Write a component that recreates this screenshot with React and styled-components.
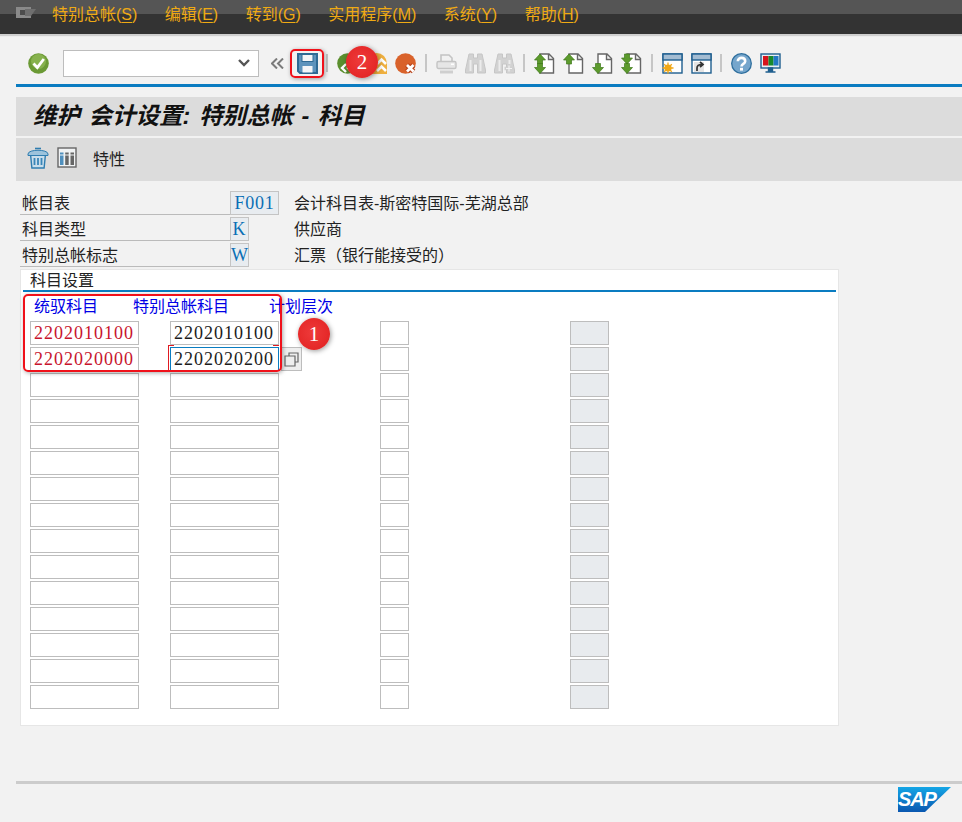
import React from "react";
import styled, { createGlobalStyle } from "styled-components";

const GlobalStyle = createGlobalStyle`
  html, body { margin: 0; padding: 0; background: #f2f2f2; }
  body { font-family: "Liberation Sans", "Noto Sans CJK SC", sans-serif; font-size: 16px; color: #222; }
`;

const Page = styled.div`
  position: relative;
  width: 962px;
  height: 822px;
  overflow: hidden;
`;

const MenuBar = styled.div`
  display: flex;
  align-items: center;
  gap: 27.5px;
  height: 34px;
  padding-left: 16px;
  box-sizing: border-box;
  background: linear-gradient(#555 0, #555 14px, #333 14px, #333 100%);
  box-shadow: 0 2px 1px #cfcfcf;
`;

const MenuLogo = styled.svg`
  width: 20px;
  height: 14px;
  margin: -8px -11.5px 0 0;
`;

const MenuItem = styled.span`
  color: #efaa14;
  font-size: 16px;
  line-height: 1;
  margin-top: -4px;
  u { text-underline-offset: 2px; }
`;

const Toolbar = styled.div`
  display: flex;
  align-items: center;
  height: 50px;
  padding: 8px 0 0 23.5px;
  box-sizing: border-box;
`;

const Rule = styled.div`
  height: 3px;
  margin-left: 16px;
  background: #0a7cc1;
`;

const Slot = styled.div`
  flex: none;
  width: ${(p) => p.$w || 29}px;
  margin-left: ${(p) => p.$ml || 0}px;
  display: flex;
  justify-content: center;
  align-items: center;
`;

const Sep = styled.div`
  flex: none;
  width: 11.5px;
  display: flex;
  justify-content: center;
  &::before {
    content: "";
    width: 2px;
    height: 18px;
    background: #c6c6c6;
  }
`;

const CommandBox = styled.div`
  flex: none;
  width: 196px;
  height: 27px;
  margin-left: 10.5px;
  box-sizing: border-box;
  background: #fff;
  border: 1px solid #bdbdbd;
  display: flex;
  align-items: center;
  justify-content: flex-end;
  padding-right: 8px;
`;

const TitleBar = styled.h1`
  margin: 10px 0 0 16px;
  height: 39px;
  padding-left: 17px;
  box-sizing: border-box;
  background: #dcdcdc;
  font-size: 23.5px;
  font-weight: 700;
  font-style: italic;
  word-spacing: 2px;
  line-height: 39px;
  color: #111;
  white-space: pre;
`;

const AppBar = styled.div`
  margin: 2px 0 0 16px;
  height: 43px;
  padding: 0 0 4px 11px;
  box-sizing: border-box;
  background: #dcdcdc;
  display: flex;
  align-items: center;
  gap: 8px;
`;

const AppBarText = styled.span`
  margin-left: 8px;
  font-size: 16px;
  color: #222;
`;

const Header = styled.div`
  margin: 10px 0 0 20px;
  display: flex;
  flex-direction: column;
  gap: 2px;
`;

const HeaderRow = styled.div`
  display: flex;
  height: 24px;
  align-items: stretch;
`;

const HeaderLabel = styled.div`
  width: 210px;
  box-sizing: border-box;
  padding-left: 2px;
  line-height: 25px;
  border-bottom: 1px solid #bbb;
  color: #222;
`;

const KeyField = styled.div`
  width: ${(p) => p.$w}px;
  box-sizing: border-box;
  background: #e8ecf0;
  border: 1px solid #c4c4c4;
  color: #0a6fb5;
  font-family: "Liberation Serif", serif;
  font-size: 18px;
  letter-spacing: 0.8px;
  line-height: 22px;
  text-align: center;
`;

const HeaderText = styled.div`
  position: absolute;
  left: 294px;
  line-height: 25px;
  color: #222;
`;

const Panel = styled.section`
  margin: 2px 0 0 20px;
  width: 819px;
  height: 457px;
  box-sizing: border-box;
  background: #fff;
  border: 1px solid #e6e6e6;
  padding-top: 1px;
`;

const PanelTitle = styled.div`
  margin: 0 2px;
  height: 19px;
  padding-left: 7px;
  line-height: 19px;
  border-bottom: 2px solid #0a7cc1;
  color: #222;
`;

const ColumnHeads = styled.div`
  display: grid;
  grid-template-columns: 99px 136px auto;
  padding-left: 13px;
  height: 29px;
  line-height: 30px;
  color: #0000e6;
`;

const Grid = styled.div`
  display: grid;
  grid-template-columns: 140px 210px 190px 39px;
  grid-auto-rows: 24px;
  row-gap: 2px;
  padding-left: 9px;
`;

const Cell = styled.div`
  position: relative;
  box-sizing: border-box;
  width: ${(p) => p.$w}px;
  height: 24px;
  background: ${(p) => (p.$grey ? "#e8ebee" : "#fff")};
  border: 1px solid ${(p) => (p.$focus ? "#0a7cc1" : "#bdbdbd")};
  color: ${(p) => (p.$red ? "#c8142d" : "#1c1c1c")};
  font-family: "Liberation Serif", serif;
  font-size: 18px;
  letter-spacing: 1px;
  line-height: 22px;
  padding-left: 3px;
`;

const HelpButton = styled.div`
  position: absolute;
  left: 110px;
  top: -1px;
  width: 21px;
  height: 24px;
  box-sizing: border-box;
  background: #eee;
  border: 1px solid #bdbdbd;
  display: flex;
  align-items: center;
  justify-content: center;
`;

const Footer = styled.footer`
  margin: 55px 0 0 16px;
  height: 3px;
  background: #ccc;
  display: flex;
  justify-content: flex-end;
  padding-right: 11px;
`;

const SapLogo = styled.svg`
  width: 53px;
  height: 25px;
  margin-top: 6px;
  flex: none;
`;

const Mark = styled.div`
  position: absolute;
  left: ${(p) => p.$x}px;
  top: ${(p) => p.$y}px;
  width: ${(p) => p.$w}px;
  height: ${(p) => p.$h}px;
  box-sizing: border-box;
  border: 2px solid #f0111a;
  border-radius: 5px;
  box-shadow: 1px 1px 4px rgba(0, 0, 0, 0.35);
  pointer-events: none;
`;

const Badge = styled.div`
  position: absolute;
  left: ${(p) => p.$x - 16}px;
  top: ${(p) => p.$y - 16}px;
  width: 32px;
  height: 32px;
  border-radius: 50%;
  background: radial-gradient(circle at 45% 45%, #ee3a3a 0, #e62a2a 60%, #d91f1f 100%);
  box-shadow: 1px 1px 5px rgba(0, 0, 0, 0.4);
  color: #fff;
  font-family: "Liberation Serif", serif;
  font-size: 21px;
  line-height: 32px;
  text-align: center;
`;

const Corner = styled.div`
  position: absolute;
  left: ${(p) => p.$x}px;
  top: ${(p) => p.$y}px;
  width: ${(p) => p.$w}px;
  height: ${(p) => p.$h}px;
  background: #e01b22;
`;

const I = ({ w = 21, h = 21, children }) => (
  <svg width={w} height={h} viewBox={`0 0 ${w} ${h}`}>
    {children}
  </svg>
);

const Check = () => (
  <I>
    <circle cx="10.5" cy="10.5" r="10.3" fill="#6b9a35" />
    <circle cx="10.5" cy="8.5" r="7.5" fill="#87b24e" />
    <path d="M5.5 10.5l3.8 4 6.5-8.5" fill="none" stroke="#fff" strokeWidth="2.8" />
  </I>
);

const Save = () => (
  <I>
    <path d="M1 1h19v19H3l-2-2z" fill="#5d93bc" stroke="#2f6a94" strokeWidth="2" />
    <rect x="5" y="1.5" width="11" height="7" fill="#f3f5f7" stroke="#2f6a94" />
    <rect x="5.5" y="13" width="10" height="6.5" fill="#f3f5f7" />
  </I>
);

const Back = () => (
  <I>
    <circle cx="10.5" cy="10.5" r="10.3" fill="#5b8f2e" />
    <path d="M9 11l-4 4 4 4M15 11l-4 4 4 4" stroke="#fff" strokeWidth="2.4" fill="none" />
  </I>
);

const Exit = () => (
  <I>
    <path d="M0 10.5a10.5 10.5 0 0 1 21 0V21H0z" fill="#efb040" />
    <path d="M11 11l4.500-4.500L20 11M11 18l4.500-4.500L20 18" stroke="#fff" strokeWidth="2.600" fill="none" />
  </I>
);

const Cancel = () => (
  <I>
    <circle cx="10.5" cy="10.5" r="10.3" fill="#d9622b" />
    <path d="M12 12l6.500 6.500M18.500 12L12 18.500" stroke="#b8431a" strokeWidth="5" />
    <path d="M12 12l6.500 6.500M18.500 12L12 18.500" stroke="#fff" strokeWidth="2.800" />
  </I>
);

const Printer = () => (
  <I>
    <path d="M5 9V2h8l3 3v4" fill="#f2f2f2" stroke="#c4c4c4" strokeWidth="1.600" />
    <rect x="1" y="8.500" width="19" height="7" rx="1.500" fill="#e6e6e6" stroke="#c4c4c4" strokeWidth="1.400" />
    <rect x="15" y="10.500" width="3" height="1.500" fill="#fff" />
    <rect x="4" y="17.500" width="13" height="3" fill="#cfcfcf" />
  </I>
);

const Binoculars = ({ plus }) => (
  <I>
    <path d="M4 1h4.500v4h4V1H17l3.500 16v3h-8v-9h-4v9H.5v-3z" fill="#d2d2d2" stroke="#c6c6c6" />
    <rect x="4.500" y="7" width="2" height="11" fill="#ececec" />
    <rect x="14.500" y="7" width="2" height="11" fill="#ececec" />
    {plus && <path d="M15 11v9M10.500 15.500h9" stroke="#d0d0d0" strokeWidth="3.400" />}
    {plus && <path d="M15 12.500v6M12 15.500h6" stroke="#f2f2f2" strokeWidth="1.200" />}
  </I>
);

const Sheet = () => (
  <path d="M6 1h9l4.500 4.500V20H6zM14.500 1v5.500h5" fill="#fff" stroke="#666" strokeWidth="1.400" />
);

const Up = ({ x, y }) => (
  <path transform={`translate(${x} ${y})`} d="M5.500 0L11 6H8v4H3V6H0z" fill="#5c9a2c" stroke="#3f7a1b" strokeWidth=".7" />
);

const Down = ({ x, y }) => (
  <path transform={`translate(${x} ${y})`} d="M3 0h5v4h3l-5.500 6L0 4h3z" fill="#5c9a2c" stroke="#3f7a1b" strokeWidth=".7" />
);

const PageFirst = () => (
  <I><Sheet /><Up x={0.5} y={1} /><Down x={0.5} y={10.5} /></I>
);
const PagePrev = () => (
  <I><Sheet /><Up x={0.5} y={1} /></I>
);
const PageNext = () => (
  <I><Sheet /><Down x={0.5} y={10.5} /></I>
);
const PageLast = () => (
  <I><Sheet /><Down x={0.5} y={1} /><Down x={0.5} y={10.5} /></I>
);

const WindowIcon = ({ children }) => (
  <I>
    <rect x="1" y="1" width="19" height="19" fill="#fff" stroke="#1f5f8f" strokeWidth="1.400" />
    <rect x="1" y="1" width="19" height="6" fill="#a3bcd2" stroke="#1f5f8f" strokeWidth="1.400" />
    {children}
  </I>
);

const Help = () => (
  <I>
    <circle cx="10.5" cy="10.5" r="9.800" fill="#76a6cc" stroke="#2f6f9e" strokeWidth="1.300" />
    <path d="M6.800 8.200c0-4.500 7.400-4.500 7.400 0 0 2.800-3.700 2.600-3.700 5.300" fill="none" stroke="#fff" strokeWidth="2.600" />
    <rect x="9" y="14.800" width="3" height="2.800" fill="#fff" />
  </I>
);

const Monitor = () => (
  <I>
    <rect x="1" y="1" width="19" height="14" fill="#e8eef3" stroke="#1f5f8f" strokeWidth="1.400" />
    <rect x="3" y="3" width="5.500" height="9.500" fill="#d7141c" />
    <rect x="8.500" y="3" width="5" height="9.500" fill="#178a2c" />
    <rect x="13.500" y="3" width="5" height="9.500" fill="#2178c4" />
    <path d="M8.500 15h4v3h-4zM5.500 19h10" stroke="#1f5f8f" strokeWidth="1.400" fill="#1f5f8f" />
  </I>
);

const Trash = () => (
  <I w={22} h={22}>
    <path d="M3.500 7h15l-1.400 14H4.900z" fill="#c9deeb" stroke="#2f7db0" strokeWidth="1.400" />
    <path d="M1 7c0-5 20-5 20 0v1.500H1z" fill="#9cc3dc" stroke="#2f7db0" />
    <path d="M8 1.500h6" stroke="#2f7db0" strokeWidth="1.600" />
    <path d="M7.500 11v7M11 11v7M14.500 11v7" stroke="#3a86b8" strokeWidth="1.800" />
  </I>
);

const Columns = () => (
  <I w={20} h={21}>
    <rect x="1" y="1" width="18" height="19" fill="#f0f2f3" stroke="#666" strokeWidth="1.400" />
    <rect x="3" y="5.500" width="3.500" height="12.500" fill="#4f8fbd" />
    <rect x="8.200" y="5.500" width="3.500" height="12.500" fill="#666" />
    <rect x="13.500" y="5.500" width="3.500" height="12.500" fill="#666" />
    <path d="M2 8h16" stroke="#f0f2f3" />
  </I>
);

const menus = [
  ["特别总帐", "S"],
  ["编辑", "E"],
  ["转到", "G"],
  ["实用程序", "M"],
  ["系统", "Y"],
  ["帮助", "H"],
];

const headerRows = [
  { label: "帐目表", key: "F001", w: 49, text: "会计科目表-斯密特国际-芜湖总部" },
  { label: "科目类型", key: "K", w: 19, text: "供应商" },
  { label: "特别总帐标志", key: "W", w: 19, text: "汇票（银行能接受的）" },
];

const rows = [
  ["2202010100", "2202010100"],
  ["2202020000", "2202020200"],
  ...Array.from({ length: 13 }, () => ["", ""]),
];

export default function App() {
  return (
    <Page>
      <GlobalStyle />
      <MenuBar>
        <MenuLogo viewBox="0 0 20 14">
          <path d="M0 1h15v11H0z" fill="#8a8a8a" />
          <path d="M4 4h7v5H4z" fill="#4c4c4c" />
          <path d="M9 3h11l-5 7H9z" fill="#6f6f6f" />
        </MenuLogo>
        {menus.map(([name, key]) => (
          <MenuItem key={key}>
            {name}(<u>{key}</u>)
          </MenuItem>
        ))}
      </MenuBar>

      <Toolbar>
        <Slot><Check /></Slot>
        <CommandBox>
          <svg width="12" height="8" viewBox="0 0 12 8">
            <path d="M1 1l5 5 5-5" fill="none" stroke="#555" strokeWidth="2.400" />
          </svg>
        </CommandBox>
        <Slot $w={29.5} $ml={4}>
          <svg width="13" height="11" viewBox="0 0 13 11">
            <path d="M6 .5L1 5.500l5 5M12 .5l-5 5 5 5" fill="none" stroke="#7b7b7b" strokeWidth="2" />
          </svg>
        </Slot>
        <Slot><Save /></Slot>
        <Sep />
        <Slot><Back /></Slot>
        <Slot><Exit /></Slot>
        <Slot><Cancel /></Slot>
        <Sep />
        <Slot><Printer /></Slot>
        <Slot><Binoculars /></Slot>
        <Slot><Binoculars plus /></Slot>
        <Sep />
        <Slot><PageFirst /></Slot>
        <Slot><PagePrev /></Slot>
        <Slot><PageNext /></Slot>
        <Slot><PageLast /></Slot>
        <Sep />
        <Slot>
          <WindowIcon>
            <circle cx="6" cy="15" r="3.600" fill="#f0a818" />
            <path d="M6 9.500v11M.5 15h11M2.200 11.200l7.600 7.600M9.800 11.200l-7.600 7.600" stroke="#f0a818" strokeWidth="1.300" />
          </WindowIcon>
        </Slot>
        <Slot>
          <WindowIcon>
            <rect x="3" y="9" width="10" height="10" fill="#e4e4e4" />
            <path d="M6 18v-3c0-2.500 2-3.500 5-3.500M9 9l3 2.500-3 2.500" stroke="#333" strokeWidth="1.700" fill="none" />
          </WindowIcon>
        </Slot>
        <Sep />
        <Slot><Help /></Slot>
        <Slot><Monitor /></Slot>
      </Toolbar>
      <Rule />

      <TitleBar>维护 会计设置: 特别总帐 - 科目</TitleBar>

      <AppBar>
        <Trash />
        <Columns />
        <AppBarText>特性</AppBarText>
      </AppBar>

      <Header>
        {headerRows.map((r) => (
          <HeaderRow key={r.key}>
            <HeaderLabel>{r.label}</HeaderLabel>
            <KeyField $w={r.w}>{r.key}</KeyField>
            <HeaderText>{r.text}</HeaderText>
          </HeaderRow>
        ))}
      </Header>

      <Panel>
        <PanelTitle>科目设置</PanelTitle>
        <ColumnHeads>
          <span>统驭科目</span>
          <span>特别总帐科目</span>
          <span>计划层次</span>
        </ColumnHeads>
        <Grid>
          {rows.map(([a, b], i) => (
            <React.Fragment key={i}>
              <Cell $w={109} $red>{a}</Cell>
              <Cell $w={109} $focus={i === 1}>
                {b}
                {i === 1 && (
                  <HelpButton>
                    <svg width="15" height="15" viewBox="0 0 15 15">
                      <path d="M5 4V1h9v9h-3M1 4h10v10H1z" fill="none" stroke="#666" strokeWidth="1.200" />
                    </svg>
                  </HelpButton>
                )}
              </Cell>
              <Cell $w={29} />
              <Cell $w={39} $grey />
            </React.Fragment>
          ))}
        </Grid>
      </Panel>

      <Footer>
        <SapLogo viewBox="0 0 53 25">
          <defs>
            <linearGradient id="sapFill" x1="0" y1="0" x2="0" y2="1">
              <stop offset="0" stopColor="#14a6e6" />
              <stop offset="1" stopColor="#0a57b0" />
            </linearGradient>
          </defs>
          <path d="M0 0h53L27 25H0z" fill="url(#sapFill)" />
          <text x="0" y="19" fontFamily="Liberation Sans" fontWeight="700" fontStyle="italic" fontSize="20" letterSpacing="-1.200" fill="#fff">SAP</text>
        </SapLogo>
      </Footer>

      <Mark $x={290} $y={49} $w={34} $h={29} />
      <Mark $x={23} $y={294} $w={259} $h={78} />
      <Corner $x={168} $y={345} $w={1} $h={26} />
      <Corner $x={168} $y={345} $w={6} $h={1} />
      <Corner $x={273} $y={345} $w={6} $h={1} />
      <Badge $x={362} $y={62}>2</Badge>
      <Badge $x={314} $y={334}>1</Badge>
    </Page>
  );
}
